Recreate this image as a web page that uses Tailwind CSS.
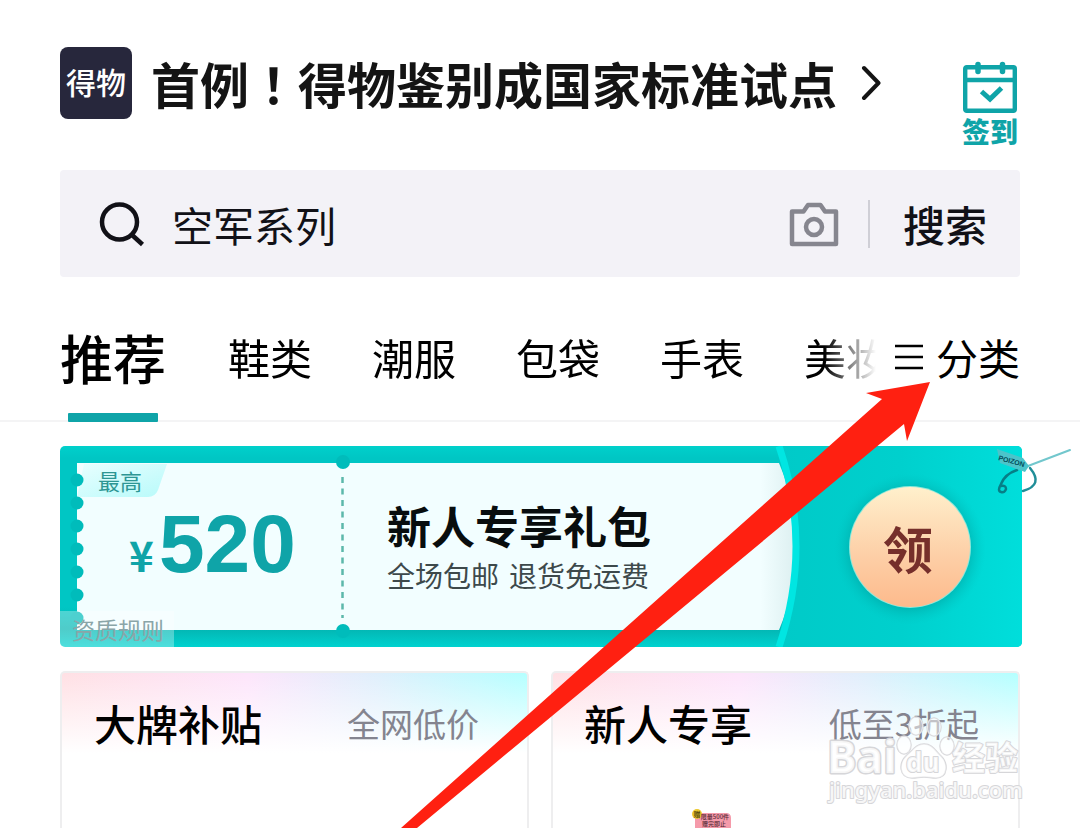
<!DOCTYPE html>
<html lang="zh-CN">
<head>
<meta charset="utf-8">
<meta name="viewport" content="width=device-width, initial-scale=1">
<title>得物</title>
<script src="https://cdn.jsdelivr.net/npm/@tailwindcss/browser@4"></script>
</head>
<body class="bg-white">
<div class="relative flex h-screen flex-col overflow-hidden font-['Noto_Sans_CJK_SC',sans-serif] text-black">

  <header class="flex h-[102px] items-start justify-between pt-[47px] pr-[62px] pl-[60px]">
    <a href="#" class="flex items-center gap-[19px]">
      <svg class="size-[72px]" viewBox="0 0 72 72" role="img" aria-label="得物">
        <rect width="72" height="72" rx="8" fill="#27273c"/>
        <text x="36" y="47" text-anchor="middle" font-family="Noto Sans CJK SC" font-size="30" font-weight="500" fill="#fff">得物</text>
      </svg>
      <span class="flex items-center gap-[24px]">
        <span class="text-[49px] leading-[72px] font-bold whitespace-nowrap text-[#141414]">首例<span lang="zh-TW" class="font-['Noto_Sans_CJK_TC',sans-serif]">！</span>得物鉴别成国家标准试点</span>
        <svg class="h-[36px] w-[20px]" viewBox="0 0 20 36" fill="none" stroke="#141414" stroke-width="4" stroke-linecap="round" stroke-linejoin="round" aria-hidden="true"><path d="M3 3 17.500 18 3 33"/></svg>
      </span>
    </a>
    <button type="button" class="mt-[14px] flex flex-col items-center text-[28px] leading-[36px] font-black text-[#0fa4a8]">
      <svg class="h-[52px] w-[54px]" viewBox="0 0 54 52" fill="none" stroke="#0fa4a8" aria-hidden="true">
        <rect x="2.200" y="6.200" width="49.600" height="43.600" rx="1.500" stroke-width="4.400"/>
        <path d="M2 19h50" stroke-width="4.400"/>
        <path d="M15 3.500v7M39.500 3.500v7" stroke-width="5.500" stroke-linecap="round"/>
        <path d="m18.500 30.500 8.500 7.500 11.500-11" stroke-width="5"/>
      </svg>
      签到
    </button>
  </header>

  <form class="mx-[60px] mt-[68px] flex h-[107px] shrink-0 items-center rounded-sm bg-[#f3f2f7] pr-[33px] pl-[39px] text-[#111117]">
    <svg class="h-[46px] w-[46px] shrink-0" viewBox="0 0 46 46" fill="none" stroke="#111117" stroke-width="4.500" aria-hidden="true"><circle cx="20.500" cy="21" r="17.500"/><path d="m32.500 33.500 11 10"/></svg>
    <input type="text" aria-label="搜索商品" value="空军系列" class="ml-[27px] min-w-0 flex-1 bg-transparent text-[41px] leading-[60px] outline-none">
    <button type="button" aria-label="拍照搜索" class="shrink-0">
      <svg class="h-[46px] w-[50px]" viewBox="0 0 50 46" fill="none" stroke="#86868f" stroke-width="4.500" stroke-linejoin="round" aria-hidden="true"><path d="M3 10.500h11.500L19 4h12.500l4.500 6.500h11V43H3Z"/><circle cx="25" cy="26" r="8"/></svg>
    </button>
    <span class="mr-[33px] ml-[29px] h-[48px] w-[2px] bg-[#cfcfd6]"></span>
    <button type="submit" class="shrink-0 text-[42px] leading-[60px] font-medium">搜索</button>
  </form>

  <div class="mt-[44px] flex h-[101px] shrink-0 items-start border-b-2 border-[#f4f4f5] px-[60px]">
    <nav class="mr-[17px] flex h-[101px] min-w-0 flex-1 items-start gap-[60px] overflow-hidden text-[42px] leading-[72px] whitespace-nowrap [mask-image:linear-gradient(to_right,#000_calc(100%-54px),transparent_calc(100%-2px))]">
      <a href="#" aria-current="page" class="flex h-[101px] flex-col items-center justify-between text-[53px] font-medium"><span>推荐</span><span class="h-[9px] w-[90px] rounded-[1px] bg-[#0fa4a8]"></span></a>
      <a href="#" class="ml-[2px]">鞋类</a>
      <a href="#">潮服</a>
      <a href="#">包袋</a>
      <a href="#">手表</a>
      <a href="#">美妆</a>
    </nav>
    <button type="button" class="flex shrink-0 items-center gap-[13px] text-[42px] leading-[72px]">
      <svg class="h-[28px] w-[28px]" viewBox="0 0 28 28" stroke="#000" stroke-width="2.600" aria-hidden="true"><path d="M0 3h28M0 14h28M0 25h28"/></svg>
      分类
    </button>
  </div>

  <section class="relative mr-[58px] ml-[60px] mt-[24px] flex h-[201px] shrink-0 items-start">
    <svg class="absolute inset-0 h-full w-full overflow-visible" viewBox="0 0 962 201" preserveAspectRatio="none" aria-hidden="true">
      <defs>
        <linearGradient id="base" x1="0" y1="0" x2="0" y2="1"><stop offset="0" stop-color="#00d0cb"/><stop offset=".06" stop-color="#00c6c4"/><stop offset=".8" stop-color="#00c6c4"/><stop offset=".91" stop-color="#03b6b3"/><stop offset="1" stop-color="#00d2cf"/></linearGradient>
        <linearGradient id="side" x1="0" y1="0" x2="1" y2="0"><stop offset="0" stop-color="#00cac8"/><stop offset=".5" stop-color="#00d0cd"/><stop offset="1" stop-color="#00dedb"/></linearGradient>
        <linearGradient id="paper" x1="0" y1="0" x2="1" y2="0"><stop offset="0" stop-color="#f2feff"/><stop offset=".95" stop-color="#f2feff"/><stop offset="1" stop-color="#dceff0"/></linearGradient>
        <linearGradient id="coin" x1="0" y1="0" x2="0" y2="1"><stop offset="0" stop-color="#fff0cc"/><stop offset=".55" stop-color="#fdd0a8"/><stop offset="1" stop-color="#fdba8c"/></linearGradient>
        <linearGradient id="label" x1="0" y1="0" x2="1" y2="1"><stop offset="0" stop-color="#e8ffff"/><stop offset="1" stop-color="#b8fafa"/></linearGradient>
        <radialGradient id="halo"><stop offset=".75" stop-color="#009c9a" stop-opacity=".55"/><stop offset="1" stop-color="#00c4c2" stop-opacity="0"/></radialGradient>
        <clipPath id="card"><rect width="962" height="201" rx="5"/></clipPath>
      </defs>
      <g clip-path="url(#card)">
        <rect width="962" height="201" fill="url(#base)"/>
        <path d="M17 17H719Q754 100 719 184H17Z" fill="url(#paper)"/>
        <path d="M24 18h83l-9 26q-3 7-10 7H17Z" fill="url(#label)"/>
        <path d="M718 0H962V201H718Q757 100 718 0Z" fill="url(#side)"/>
        <path d="M719 0Q753 100 719 201" fill="none" stroke="#00e6e2" stroke-width="7"/>
        <g fill="#00bcbb"><circle cx="17" cy="34" r="6.500"/><circle cx="17" cy="57" r="6.500"/><circle cx="17" cy="80" r="6.500"/><circle cx="17" cy="103" r="6.500"/><circle cx="17" cy="126" r="6.500"/><circle cx="17" cy="149" r="6.500"/><circle cx="17" cy="172" r="6.500"/><circle cx="283" cy="16" r="7"/><circle cx="283" cy="185" r="7"/></g>
        <path d="M282.500 31V172" stroke="#5cb8ab" stroke-width="2.500" stroke-dasharray="6 5.500"/>
        <circle cx="850" cy="103" r="76" fill="url(#halo)"/>
        <circle cx="850" cy="101" r="61" fill="#8de8da"/>
        <circle cx="850" cy="101" r="60" fill="url(#coin)"/>
      </g>
      <g fill="none" stroke-linecap="round">
        <path d="M957 24Q945 28 941 38q-4 7 0 8 4 1 5-3 0-4-5-3" stroke="#067f87" stroke-width="2.500"/>
        <path d="M970 22Q984 39 963 45" stroke="#208e98" stroke-width="2.500"/>
        <path d="M968 20 1010 4" stroke="#72c7cd" stroke-width="2"/>
      </g>
      <path d="m937 3 26 9 6 8-4 6-25-9Z" fill="#4cc4ca"/>
      <text x="938" y="14" transform="rotate(15 938 14)" font-family="Liberation Sans" font-size="7" font-weight="700" fill="#044e5b">POIZON</text>
    </svg>
    <div class="relative h-[201px] w-[283px]">
      <p class="pt-[18px] pl-[38px] text-[22px] leading-[32px] text-[#2d9693]">最高</p>
      <p class="flex items-baseline pl-[69px] leading-[96px] font-bold text-[#0fa4a8]"><span class="w-[30px] text-[42px]">¥</span><span class="font-['Liberation_Sans',sans-serif] text-[82px]">520</span></p>
      <a href="#" class="absolute bottom-0 left-0 h-[36px] w-[114px] rounded-bl bg-white/30 pl-[12px] text-[23px] leading-[36px] whitespace-nowrap text-[#8aa5a8]">资质规则</a>
    </div>
    <div class="relative ml-[44px] pt-[48px] whitespace-nowrap">
      <h2 class="text-[44px] leading-[62px] font-bold text-[#080d0e]">新人专享礼包</h2>
      <p class="flex gap-[10px] text-[28px] leading-[38px] text-[#3d494b]"><span>全场包邮</span><span>退货免运费</span></p>
    </div>
    <button type="button" class="relative mt-[41px] mr-[54px] ml-auto size-[120px] rounded-full text-[50px] leading-[112px] font-bold text-[#762f2b]">领</button>
  </section>

  <main class="mx-[60px] mt-[24px] grid min-h-0 flex-1 grid-cols-2 gap-[22px]">
    <section class="rounded-t-[5px] border-x-2 border-t-2 border-[#eeeeef] bg-[linear-gradient(to_bottom,#ffffff00,#fff_80px),linear-gradient(to_right,#ffe0e4,#fde5fb_40%,#dfeffc_68%,#b4ffff)]">
      <div class="flex items-center justify-between pt-[19px] pr-[48px] pl-[32px] whitespace-nowrap">
        <h2 class="text-[42px] leading-[62px] font-medium">大牌补贴</h2>
        <p class="text-[33px] leading-[62px] text-[#84848f]">全网低价</p>
      </div>
    </section>
    <section class="relative rounded-t-[5px] border-x-2 border-t-2 border-[#eeeeef] bg-[linear-gradient(to_bottom,#ffffff00,#fff_80px),linear-gradient(to_right,#ffe0e4,#fde5fb_40%,#dfeffc_68%,#b4ffff)]">
      <div class="flex items-center justify-between pt-[19px] pr-[39px] pl-[31px] whitespace-nowrap">
        <h2 class="text-[42px] leading-[62px] font-medium">新人专享</h2>
        <p class="text-[33px] leading-[62px] text-[#84848f]">低至3折起</p>
      </div>
      <!-- gift badge on top of the product picture -->
      <svg class="absolute top-[135px] left-[138px] h-[30px] w-[50px]" viewBox="0 0 50 30" font-family="Noto Sans CJK SC" font-weight="500" text-anchor="middle">
        <path d="M4 5h31q5 0 5 5v10H4Z" fill="#f59aaa"/>
        <circle cx="6" cy="6" r="5" fill="#edc92e"/>
        <text x="6" y="9" font-size="7" fill="#493b0a">赠</text>
        <text x="24" y="11" font-size="6" fill="#572b36">限量500件</text>
        <text x="23" y="18" font-size="6" fill="#572b36">赠完即止</text>
      </svg>
    </section>
  </main>

  <!-- pointer to the category button -->
  <svg class="pointer-events-none absolute top-[382px] right-[150px] h-[446px] w-[530px]" viewBox="0 0 530 446" aria-hidden="true"><path d="M530 0 466 11 482 17 1 446H17L504 42 507 59Z" fill="#ff2011"/></svg>

  <svg class="pointer-events-none absolute top-[708px] right-[50px] h-[100px] w-[204px]" viewBox="0 0 204 100" font-family="Noto Sans CJK SC" fill="#fff" fill-opacity=".8" stroke="#d6d6d9" stroke-width="3" stroke-linejoin="round" paint-order="stroke">
    <text x="1" y="65" font-size="44" font-weight="700" font-family="Open Sans">Bai</text>
    <g stroke-width="1.500" fill-opacity=".5">
      <ellipse cx="78" cy="37" rx="7" ry="9"/><ellipse cx="90" cy="18" rx="7" ry="9"/><ellipse cx="108" cy="19" rx="7" ry="9"/><ellipse cx="121" cy="38" rx="7" ry="9"/>
      <path d="M98 36c8 0 11 6 16 11 9 8 8 23-4 23-5 0-7-1-12-1s-7 1-12 1c-13 0-14-15-5-23 6-5 9-11 17-11Z"/>
    </g>
    <text x="80" y="64" font-size="26" font-weight="700" stroke-width="2" font-family="Open Sans">du</text>
    <text x="126" y="62" font-size="33" font-weight="700" stroke-width="2">经验</text>
    <text x="3" y="90" font-size="22" font-family="Noto Sans" font-weight="500" stroke-width="2">jingyan.baidu.com</text>
  </svg>
</div>
</body>
</html>
